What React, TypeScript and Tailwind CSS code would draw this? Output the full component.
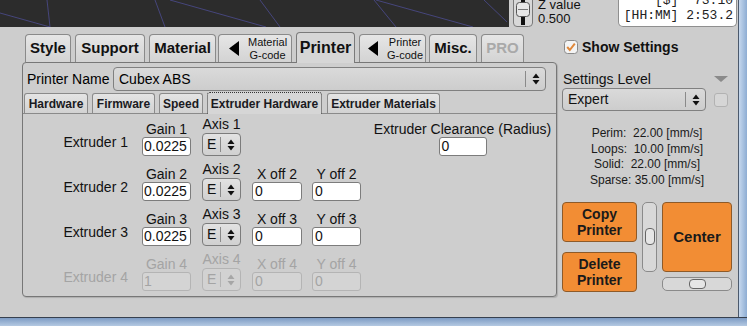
import React from 'react';

function UpDown({ dim }: { dim?: boolean }) {
  return (
    <svg width="8" height="12" viewBox="0 0 8 12" className="shrink-0">
      <path d="M0.5 5 L4 0.5 L7.5 5 Z M0.5 7 L4 11.5 L7.5 7 Z" fill={dim ? '#a6a6a6' : '#111'} />
    </svg>
  );
}

function LeftArrow() {
  return (
    <svg width="10" height="15" viewBox="0 0 10 15" className="shrink-0">
      <path d="M10 0 L0 7.5 L10 15 Z" fill="#000" />
    </svg>
  );
}

type TabProps = { cls: string; selected?: boolean; children: React.ReactNode };

function MainTab({ cls, selected, children }: TabProps) {
  return (
    <div
      className={`flex items-center justify-center rounded-t-[4px] border border-b-0 ${
        selected
          ? 'relative z-10 h-[31px] -mb-px border-[#7a7a7a] bg-[#d6d6d6]'
          : 'h-[28px] border-[#8a8a8a] bg-linear-to-b from-[#e6e6e6] to-[#d3d3d3]'
      } ${cls}`}
    >
      {children}
    </div>
  );
}

function SubTab({ cls, selected, children }: TabProps) {
  return (
    <div
      className={`flex items-center justify-center rounded-t-[3px] border border-b-0 text-[12px] font-bold text-[#1a1a22] ${
        selected
          ? 'relative z-10 h-[22px] -mb-px border-dotted border-[#333] bg-[#d6d6d6]'
          : 'h-[20px] border-[#8a8a8a] bg-linear-to-b from-[#e4e4e4] to-[#d2d2d2]'
      } ${cls}`}
    >
      {children}
    </div>
  );
}

function Field({ value, cls = '', dim }: { value: string; cls?: string; dim?: boolean }) {
  return (
    <div
      className={`h-[19px] w-full rounded-[3px] border text-[14px] leading-[17px] ${
        dim ? 'border-[#b4b4b4] bg-[#d4d4d4] text-[#a4a4a4]' : 'border-[#7c7c7c] bg-white text-[#111]'
      } ${cls}`}
    >
      {value}
    </div>
  );
}

function AxisSelect({ dim }: { dim?: boolean }) {
  return (
    <div
      className={`flex h-[23px] w-[39px] items-center rounded-[4px] border text-[14px] ${
        dim ? 'border-[#b4b4b4] bg-[#d2d2d2] text-[#a4a4a4]' : 'border-[#7c7c7c] bg-linear-to-b from-[#e2e2e2] to-[#d0d0d0]'
      }`}
    >
      <span className="w-[17px] pl-[4px]">E</span>
      <div className={`h-[15px] w-px ${dim ? 'bg-[#b4b4b4]' : 'bg-[#8a8a8a]'}`} />
      <div className="flex flex-1 justify-center">
        <UpDown dim={dim} />
      </div>
    </div>
  );
}

function Col({ cls, label, children, dim }: { cls: string; label?: string; children?: React.ReactNode; dim?: boolean }) {
  return (
    <div className={`flex shrink-0 flex-col items-center ${cls}`}>
      {label && (
        <span className={`whitespace-nowrap text-[14px] leading-[16px] ${dim ? 'text-[#a4a4a4]' : ''}`}>{label}</span>
      )}
      {children}
    </div>
  );
}

function ExtruderRow({ n, dim }: { n: number; dim?: boolean }) {
  const gain = dim ? '1' : '0.0225';
  return (
    <div className="flex h-[40px] items-end">
      <span className={`mb-[6px] w-[105px] shrink-0 text-right text-[14px] leading-[16px] ${dim ? 'text-[#a4a4a4]' : ''}`}>
        Extruder {n}
      </span>
      <Col cls="ml-[14px] w-[49px]" label={`Gain ${n}`} dim={dim}>
        <Field value={gain} cls="pl-px" dim={dim} />
      </Col>
      <Col cls="ml-[11px] w-[39px]" label={`Axis ${n}`} dim={dim}>
        <div className="mt-px">
          <AxisSelect dim={dim} />
        </div>
      </Col>
      {n === 1 ? (
        <>
          <div className="ml-[11px] w-[50px] shrink-0" />
          <div className="ml-[10px] w-[49px] shrink-0" />
          <Col cls="ml-[12px] w-[179px]" label="Extruder Clearance (Radius)">
            <div className="w-[48px]">
              <Field value="0" cls="pl-[2px]" />
            </div>
          </Col>
        </>
      ) : (
        <>
          <Col cls="ml-[11px] w-[50px]" label={`X off ${n}`} dim={dim}>
            <Field value="0" cls="pl-[2px]" dim={dim} />
          </Col>
          <Col cls="ml-[10px] w-[49px]" label={`Y off ${n}`} dim={dim}>
            <Field value="0" cls="pl-[2px]" dim={dim} />
          </Col>
        </>
      )}
    </div>
  );
}

function ZSlider() {
  return (
    <svg width="20" height="27" viewBox="0 0 20 27" className="ml-[4px] shrink-0">
      <path d="M0.5 -2 V23 Q0.5 26.5 4 26.5 H15.5 Q19.5 26.5 19.5 23 V-2" fill="#d8d8d8" stroke="#7a7a7a" />
      <rect x="8" y="0" width="4" height="25" fill="#111" />
      <rect x="3.5" y="2.5" width="13" height="14" rx="3" fill="#e6e6e6" stroke="#555" />
      <line x1="5" y1="9.5" x2="15" y2="9.5" stroke="#777" />
    </svg>
  );
}

function OrangeButton({ cls, children }: { cls: string; children: React.ReactNode }) {
  return (
    <div
      className={`flex flex-col items-center justify-center rounded-[4px] border border-[#8e5a28] bg-[#f28d34] font-bold text-[#1a1a1a] ${cls}`}
    >
      {children}
    </div>
  );
}

function TopStrip() {
  return (
    <div className="flex h-[27px] shrink-0">
      <svg width="509" height="27" viewBox="0 0 509 27" className="shrink-0 bg-[#2c2c2c]">
        <g stroke="#46467c" strokeWidth="1" fill="none">
          <line x1="0" y1="13" x2="50" y2="27" />
          <line x1="47" y1="0" x2="50" y2="27" />
          <line x1="155" y1="0" x2="165" y2="27" />
          <line x1="170" y1="0" x2="266" y2="27" />
          <line x1="260" y1="0" x2="280" y2="27" />
          <line x1="374" y1="0" x2="396" y2="27" />
          <line x1="376" y1="0" x2="473" y2="27" />
          <line x1="484" y1="0" x2="507" y2="22" />
        </g>
      </svg>
      <ZSlider />
      <div className="ml-[5px] -mt-[2px] text-[13px] leading-[14px] text-[#111]">
        <div>Z value</div>
        <div>0.500</div>
      </div>
      <div className="ml-auto mr-px h-[27px] w-[119px] overflow-hidden rounded-b-[5px] border border-t-0 border-[#8f8f8f] bg-white pr-[3px] text-right font-['Liberation_Mono',monospace] text-[13px] leading-[15px] text-[#222]">
        <div className="-mt-[7px] whitespace-pre">{'[$]  73.10'}</div>
        <div className="whitespace-pre">{'[HH:MM] 2:53.2'}</div>
      </div>
    </div>
  );
}

function LeftPane() {
  return (
    <div className="ml-[22px] mt-[5px] flex w-[535px] shrink-0 flex-col">
      <div className="flex h-[30px] items-end text-[15px] font-bold text-[#111]">
        <MainTab cls="ml-[3px] w-[46px]">Style</MainTab>
        <MainTab cls="ml-[4px] w-[70px]">Support</MainTab>
        <MainTab cls="ml-[4px] w-[67px]">Material</MainTab>
        <MainTab cls="ml-[2px] w-[74px] justify-start pl-[10px]">
          <LeftArrow />
          <div className="ml-[9px] whitespace-nowrap text-center text-[11px] font-normal leading-[12.5px]">
            Material
            <br />
            G-code
          </div>
        </MainTab>
        <MainTab cls="ml-[4px] w-[59px] text-[16px]" selected>
          Printer
        </MainTab>
        <MainTab cls="ml-[4px] w-[67px] justify-start pl-[8px]">
          <LeftArrow />
          <div className="ml-[9px] whitespace-nowrap text-center text-[11px] font-normal leading-[12.5px]">
            Printer
            <br />
            G-code
          </div>
        </MainTab>
        <MainTab cls="ml-[3px] w-[48px]">Misc.</MainTab>
        <MainTab cls="ml-[4px] w-[43px] text-[#a9a9a9]">PRO</MainTab>
      </div>

      <div className="flex h-[235px] flex-col rounded-[4px] border border-[#777] bg-[#cecece] shadow-[1px_1px_1px_rgba(0,0,0,0.15)]">
        <div className="flex items-center pl-[4px] pt-[4px] text-[14px]">
          <span className="w-[86px] shrink-0">Printer Name</span>
          <div className="flex h-[24px] w-[433px] items-center rounded-[4px] border border-[#808080] bg-linear-to-b from-[#dadada] to-[#cdcdcd]">
            <span className="flex-1 pl-[5px]">Cubex ABS</span>
            <div className="h-[16px] w-px bg-[#8a8a8a]" />
            <div className="flex w-[19px] justify-center">
              <UpDown />
            </div>
          </div>
        </div>

        <div className="mt-px flex h-[21px] items-end">
          <SubTab cls="ml-px w-[64px]">Hardware</SubTab>
          <SubTab cls="ml-[4px] w-[63px]">Firmware</SubTab>
          <SubTab cls="ml-[4px] w-[44px]">Speed</SubTab>
          <SubTab cls="ml-[4px] w-[115px]" selected>
            Extruder Hardware
          </SubTab>
          <SubTab cls="ml-[5px] w-[113px]">Extruder Materials</SubTab>
        </div>

        <div className="flex flex-1 flex-col gap-[5px] border-t border-[#8a8a8a] pt-[2px] text-[#111]">
          <ExtruderRow n={1} />
          <ExtruderRow n={2} />
          <ExtruderRow n={3} />
          <ExtruderRow n={4} dim />
        </div>
      </div>
    </div>
  );
}

function RightPane() {
  return (
    <div className="ml-[5px] flex w-[175px] shrink-0 flex-col text-[#111]">
      <div className="mt-[12px] flex h-[16px] items-center">
        <svg width="14" height="14" viewBox="0 0 14 14" className="ml-[2px] shrink-0">
          <rect x="0.5" y="0.5" width="13" height="13" rx="3" fill="#f4f4f4" stroke="#8a8a8a" />
          <path d="M3.2 7 L5.8 10 L10.8 3.6" fill="none" stroke="#e0883a" strokeWidth="2" />
        </svg>
        <span className="ml-[4px] text-[14px] font-bold">Show Settings</span>
      </div>

      <div className="mt-[16px] flex h-[16px] items-center">
        <span className="ml-px text-[14px]">Settings Level</span>
        <svg width="14" height="7" viewBox="0 0 14 7" className="ml-auto mr-[9px] shrink-0">
          <path d="M0 0 H14 L7 6 Z" fill="#8a8a8a" />
        </svg>
      </div>

      <div className="mt-px flex items-center">
        <div className="flex h-[23px] w-[144px] items-center rounded-[4px] border border-[#808080] bg-linear-to-b from-[#dadada] to-[#cdcdcd] text-[14px]">
          <span className="flex-1 pl-[5px]">Expert</span>
          <div className="h-[15px] w-px bg-[#8a8a8a]" />
          <div className="flex w-[19px] justify-center">
            <UpDown />
          </div>
        </div>
        <div className="ml-[8px] h-[14px] w-[14px] rounded-[3px] border border-[#b2b2b2] bg-[#d6d6d6]" />
      </div>

      <div className="mt-[15px] w-[170px] whitespace-pre text-center text-[12px] leading-[15.5px] text-[#1a1a1a]">
        <div>{'Perim:  22.00 [mm/s]'}</div>
        <div>{'Loops:  10.00 [mm/s]'}</div>
        <div>{'Solid:  22.00 [mm/s]'}</div>
        <div>{'Sparse: 35.00 [mm/s]'}</div>
      </div>

      <div className="mt-[14px] flex">
        <div className="flex flex-col gap-[10px]">
          <OrangeButton cls="h-[40px] w-[75px] text-[14px] leading-[16px]">
            <span>Copy</span>
            <span>Printer</span>
          </OrangeButton>
          <OrangeButton cls="h-[40px] w-[75px] text-[14px] leading-[16px]">
            <span>Delete</span>
            <span>Printer</span>
          </OrangeButton>
        </div>
        <div className="ml-[5px] flex h-[70px] w-[15px] items-start justify-center rounded-[5px] border border-[#8a8a8a] bg-[#d8d8d8] pt-[25px]">
          <div className="h-[17px] w-[10px] rounded-[4px] border border-[#666] bg-[#e6e6e6]" />
        </div>
        <div className="ml-[5px] flex flex-col">
          <OrangeButton cls="h-[70px] w-[70px] text-[15px]">Center</OrangeButton>
          <div className="mt-[5px] flex h-[14px] w-[70px] items-center rounded-[5px] border border-[#8a8a8a] bg-[#d8d8d8] pl-[26px]">
            <div className="h-[10px] w-[17px] rounded-[4px] border border-[#666] bg-[#e6e6e6]" />
          </div>
        </div>
      </div>
    </div>
  );
}

export default function App() {
  return (
    <div className="flex h-[326px] w-[747px] flex-col overflow-hidden bg-[#cdcdcd] font-['Liberation_Sans',Arial,sans-serif]">
      <div className="flex h-[317px] shrink-0">
        <div className="flex w-[738px] shrink-0 flex-col">
          <TopStrip />
          <div className="flex">
            <LeftPane />
            <RightPane />
          </div>
        </div>
        <div className="w-[9px] border-l border-[#4b596c] bg-linear-to-r from-[#c6d8ee] to-[#8eadd3]" />
      </div>
      <div className="h-[9px] border-t border-[#37414f] bg-linear-to-b from-[#7e9cc4] to-[#b4c9e2]" />
    </div>
  );
}
